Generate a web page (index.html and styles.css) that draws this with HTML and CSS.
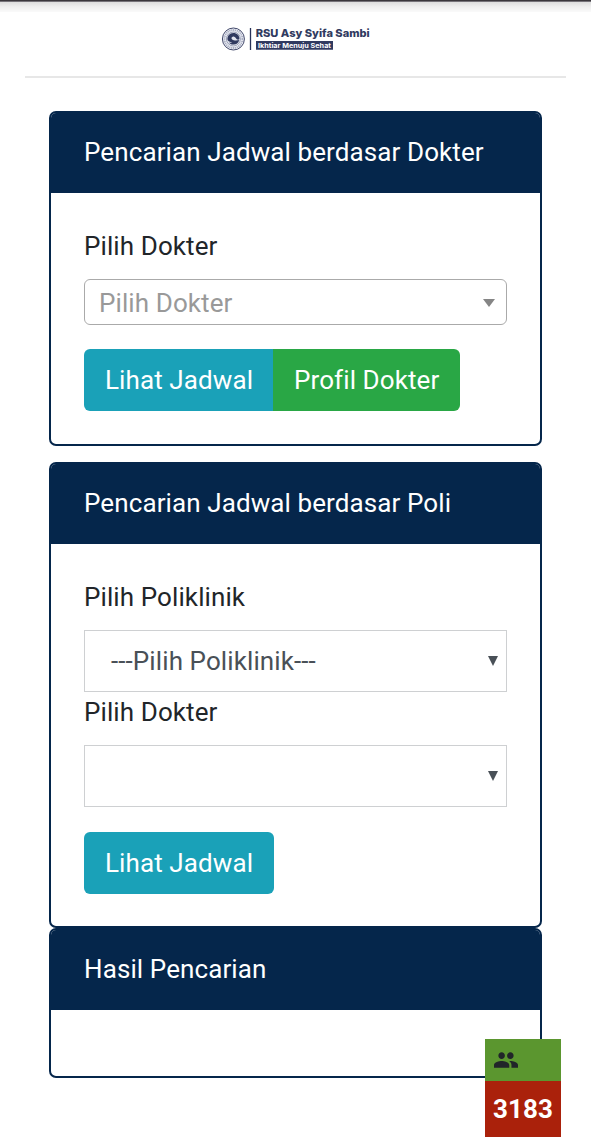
FILE: index.html
```html
<!DOCTYPE html>
<html lang="id">
<head>
<meta charset="utf-8">
<meta name="viewport" content="width=device-width, initial-scale=1">
<title>RSU Asy Syifa Sambi</title>
<link rel="stylesheet" href="styles.css">
</head>
<body>
<header class="site-header">
  <svg class="logo" viewBox="0 0 156 28" role="img" aria-label="RSU Asy Syifa Sambi">
    <circle cx="12.4" cy="13" r="11" fill="#eef0f7" stroke="#404769" stroke-width="1"/>
    <circle cx="12.4" cy="13" r="9" fill="none" stroke="#a9aec2" stroke-width="1.8" stroke-dasharray="1.2 .7"/>
    <circle cx="12.4" cy="13" r="7" fill="#e1e4ee" stroke="#6c7390" stroke-width=".6"/>
    <path d="M6.5 13.8c-.5-3.8 2.2-6.7 5.8-6.8 3.7 0 6.3 2.6 6.1 6-.8 1.1-2.1.8-2.9-.1-1-1.1-2.2-2.7-3.8-2.2-1.4.4-1.6 2-.5 2.9 1.7 1.3 4.7 1.2 7 .5-.7 3.2-3.2 4.7-6 4.5-2-.1-3.4-.9-4.4-2.1 1.7.4 2.8.3 3.5-.2-2.6-.3-4.2-1-4.8-2.5z" fill="#303a60"/>
    <path d="M29.5 2v22" stroke="#273158" stroke-width="1.3"/>
    <text class="logo-name" x="34.7" y="11.2" textLength="114" lengthAdjust="spacingAndGlyphs">RSU Asy Syifa Sambi</text>
    <path d="M35 15h77v8.8H35z" fill="#303a60"/>
    <text class="logo-tagline" x="37" y="21.6" textLength="73" lengthAdjust="spacingAndGlyphs">Ikhtiar Menuju Sehat</text>
  </svg>
</header>
<main class="content">
  <section class="card card-doctor">
    <h2 class="card-header">Pencarian Jadwal berdasar Dokter</h2>
    <div class="card-body">
      <div class="label">Pilih Dokter</div>
      <div class="search-select"><span>Pilih Dokter</span>
        <svg class="caret" viewBox="0 0 12 8"><path d="M0 0h12L6 8z" fill="#858585"/></svg>
      </div>
      <div class="button-group">
        <button class="button button-info">Lihat Jadwal</button>
        <button class="button button-success">Profil Dokter</button>
      </div>
    </div>
  </section>
  <section class="card card-clinic">
    <h2 class="card-header">Pencarian Jadwal berdasar Poli</h2>
    <div class="card-body">
      <div class="label">Pilih Poliklinik</div>
      <div class="select"><span>---Pilih Poliklinik---</span>
        <svg class="arrow" viewBox="0 0 10 10"><path d="M0 0h10L5 10z" fill="#495057"/></svg>
      </div>
      <div class="label">Pilih Dokter</div>
      <div class="select"><span></span>
        <svg class="arrow" viewBox="0 0 10 10"><path d="M0 0h10L5 10z" fill="#495057"/></svg>
      </div>
      <div class="button-group">
        <button class="button button-info">Lihat Jadwal</button>
      </div>
    </div>
  </section>
  <section class="card card-results">
    <h2 class="card-header">Hasil Pencarian</h2>
    <div class="card-body"></div>
  </section>
</main>
<aside class="visitors">
  <div class="visitors-icon">
    <svg class="people" viewBox="1 5 22 14"><path d="M16 11c1.66 0 2.99-1.34 2.99-3S17.66 5 16 5s-3 1.34-3 3 1.34 3 3 3zm-8 0c1.66 0 2.99-1.34 2.99-3S9.66 5 8 5 5 6.34 5 8s1.34 3 3 3zm0 2c-2.33 0-7 1.17-7 3.5V19h14v-2.5c0-2.33-4.67-3.5-7-3.5zm8 0c-.29 0-.62.02-.97.05 1.16.84 1.97 1.97 1.97 3.45V19h6v-2.5c0-2.33-4.67-3.5-7-3.5z" fill="#212529"/></svg>
  </div>
  <div class="visitors-count">3183</div>
</aside>
</body>
</html>
```
FILE: styles.css
```css
* { box-sizing: border-box; }
body {
  margin: 0;
  height: 1137px;
  overflow: hidden;
  background: #fff;
  color: #212529;
  font: 26px/38px Roboto, sans-serif;
  letter-spacing: 0.1px;
}
.site-header {
  height: 78px;
  margin: 0 25px;
  padding: 26px 0 0 196px;
  border-bottom: 2px solid #e7e7e7;
}
body::before {
  content: "";
  display: block;
  height: 12px;
  margin-bottom: -12px;
  background: linear-gradient(#3b383d 0 1px, #77747a 1px 2px, #dedede 2px, #f0f0f0 7px, #fafafa 12px);
}
.logo { display: block; width: 156px; height: 28px; overflow: visible; letter-spacing: 0; }
.logo-name { font: 800 10.3px Inter, sans-serif; fill: #303a60; }
.logo-tagline { font: 700 6.6px Inter, sans-serif; fill: #fff; }
.content { width: 493px; margin: 33px 0 0 49px; }
.card {
  display: flex;
  flex-direction: column;
  border: 2px solid #05264b;
  border-radius: 7px;
  overflow: hidden;
}
.card-doctor { height: 335px; margin-bottom: 16px; }
.card-clinic { height: 466px; }
.card-results { height: 150px; }
.card-header {
  flex: none;
  height: 80px;
  margin: 0;
  padding: 20px 33px;
  background: #05264b;
  color: #fff;
  font-size: 26px;
  font-weight: 400;
}
.card-body { padding: 33px; }
.label { height: 53px; padding-top: 1px; }
.search-select, .select {
  display: flex;
  align-items: center;
  justify-content: space-between;
}
.search-select {
  height: 46px;
  padding: 2px 11px 0 14px;
  border: 1.6px solid #aaa;
  border-radius: 6px;
  color: #999;
}
.caret { width: 12px; height: 8px; }
.button-group { display: flex; margin-top: 24px; }
.card-clinic .button-group { margin-top: 25px; }
.button {
  height: 62px;
  padding: 0 21px;
  border: 0;
  border-radius: 6px;
  color: #fff;
  font: inherit;
  letter-spacing: inherit;
  white-space: nowrap;
}
.button-info { background: #1aa1b8; }
.button-success { background: #29a745; }
.button-info:not(:last-child) { width: 189px; border-radius: 6px 0 0 6px; }
.button-success { width: 187px; border-radius: 0 6px 6px 0; }
.select {
  height: 62px;
  padding: 0 8px 0 26px;
  border: 1.5px solid #ced0d2;
  color: #495057;
}
.arrow { width: 10px; height: 10px; }
.visitors {
  position: absolute;
  left: 485px;
  top: 1039px;
  width: 76px;
  height: 98px;
}
.visitors-icon { height: 42px; padding: 13px 9px; background: #5b962f; }
.people { display: block; width: 24px; height: 16px; }
.visitors-count {
  height: 56px;
  background: #aa210b;
  color: #fff;
  font-weight: 700;
  line-height: 56px;
  text-align: center;
}
```
